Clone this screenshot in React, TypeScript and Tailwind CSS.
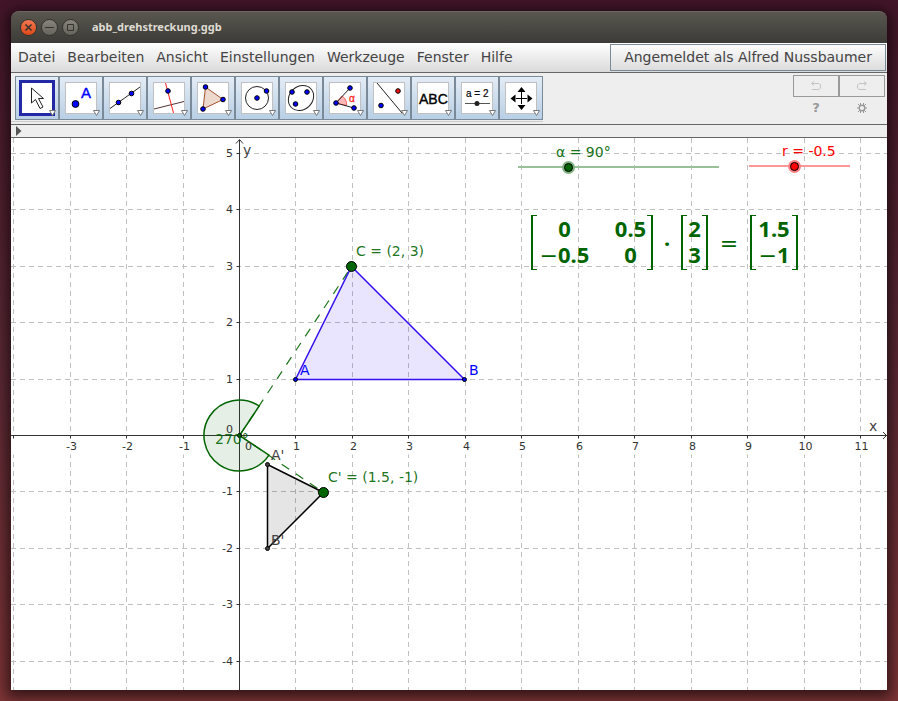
import { useState } from "react";
import type { ReactNode } from "react";

const UNIT = 56.45;
const ORIGIN_X = 228.5;
const ORIGIN_Y = 297.5;

const snap = (n: number) => Math.floor(n) + 0.5;
const px = (x: number) => snap(ORIGIN_X + x * UNIT);
const py = (y: number) => snap(ORIGIN_Y - y * UNIT);

const columns = Array.from({ length: 16 }, (_, i) => i - 4).filter((n) => n !== 0);
const rows = Array.from({ length: 10 }, (_, i) => 5 - i).filter((n) => n !== 0);

const MENU = ["Datei", "Bearbeiten", "Ansicht", "Einstellungen", "Werkzeuge", "Fenster", "Hilfe"];

const Dot = ({ x, y, r = 2.3, fill = "#0000ff" }: { x: number; y: number; r?: number; fill?: string }) => (
  <circle cx={x} cy={y} r={r} fill={fill} stroke="#000" />
);

const TOOLS: { name: string; icon: ReactNode }[] = [
  {
    name: "Bewege",
    icon: <path d="M10.500 8v15l4-3.500 4.500 9 3-1.500-4.500-8.500h5z" fill="#fff" stroke="#222" />,
  },
  {
    name: "Punkt",
    icon: (
      <>
        <Dot x={10.5} y={24} r={3.4} />
        <text x="16" y="18" fontSize="15" fill="#0000ff" stroke="#0000ff" strokeWidth=".4" className="font-['Liberation_Sans',sans-serif]">A</text>
      </>
    ),
  },
  {
    name: "Gerade",
    icon: (
      <>
        <path d="M1 28.500L31 7" stroke="#222" />
        <Dot x={9.5} y={22.5} />
        <Dot x={22.5} y={13.5} />
      </>
    ),
  },
  {
    name: "Senkrechte Gerade",
    icon: (
      <>
        <path d="M1 29L31 21.500" stroke="#533" />
        <path d="M12.500 3L20.500 33" stroke="#ff2020" />
        <Dot x={15} y={11} />
      </>
    ),
  },
  {
    name: "Vieleck",
    icon: (
      <>
        <path d="M8.500 7L26 19.500 6 29z" fill="#ecd8cd" stroke="#a0522d" />
        <Dot x={8.5} y={7} />
        <Dot x={26} y={19.5} />
        <Dot x={6} y={29} />
      </>
    ),
  },
  {
    name: "Kreis",
    icon: (
      <>
        <circle cx="16" cy="18" r="11.500" fill="none" stroke="#222" />
        <Dot x={16} y={18} />
        <Dot x={25.5} y={11} />
      </>
    ),
  },
  {
    name: "Ellipse",
    icon: (
      <>
        <ellipse cx="16" cy="18" rx="13.500" ry="11.500" transform="rotate(-42 16 18)" fill="none" stroke="#222" />
        <Dot x={7} y={12} />
        <Dot x={22} y={12} />
        <Dot x={10.5} y={24} />
      </>
    ),
  },
  {
    name: "Winkel",
    icon: (
      <>
        <path d="M7 23L13 16A10 10 0 0 1 17.500 25.500z" fill="#ffb8b8" stroke="#ff6060" />
        <path d="M21 8L7 23l18 5" fill="none" stroke="#222" />
        <Dot x={7} y={23} />
        <Dot x={21} y={8} />
        <Dot x={25} y={28} />
        <text x="20" y="21.500" fontSize="10" fill="#f22" stroke="#f22" strokeWidth=".3" className="font-['Liberation_Sans',sans-serif]">α</text>
      </>
    ),
  },
  {
    name: "Spiegele an Gerade",
    icon: (
      <>
        <path d="M4 3L29 33" stroke="#222" />
        <Dot x={25} y={11} fill="#f01010" />
        <Dot x={8} y={25.5} />
      </>
    ),
  },
  {
    name: "Text",
    icon: (
      <text x="2" y="23.500" fontSize="14" stroke="#000" strokeWidth=".4" className="font-['Liberation_Sans',sans-serif]">ABC</text>
    ),
  },
  {
    name: "Schieberegler",
    icon: (
      <>
        <text x="5" y="17" fontSize="10" stroke="#111" strokeWidth=".2" className="font-['Liberation_Sans',sans-serif]">a = 2</text>
        <path d="M4 23.500h25" stroke="#555" />
        <circle cx="16" cy="23.500" r="2.500" fill="#222" />
      </>
    ),
  },
  {
    name: "Verschiebe Zeichenblatt",
    icon: (
      <>
        <path d="M16.500 12v12M11 18.500h11" stroke="#000" />
        <path d="M16.500 7l4 5h-8zM16.500 30l4-5h-8zM5.500 18.500l5-4v8zM27.500 18.500l-5-4v8z" />
      </>
    ),
  },
];

function TitleBar() {
  const button = "flex size-[17px] items-center justify-center rounded-full border border-[#33322e]";
  return (
    <header className="flex h-8 items-center gap-1 rounded-t-lg border-t border-[#6b6961] bg-linear-to-b from-[#59574f] to-[#3c3b37] pl-[9px] text-[#34332f]">
      <button aria-label="Schließen" className={`${button} bg-linear-to-b from-[#f5774f] to-[#dd4814]`}>
        <svg width="9" height="9" stroke="currentColor" strokeWidth="1.500"><path d="M1.500 1.500l6 6M7.500 1.500l-6 6" /></svg>
      </button>
      <button aria-label="Minimieren" className={`${button} bg-linear-to-b from-[#87857c] to-[#65635c]`}>
        <svg width="9" height="9" stroke="currentColor"><path d="M0 4.500h9" /></svg>
      </button>
      <button aria-label="Maximieren" className={`${button} bg-linear-to-b from-[#87857c] to-[#65635c]`}>
        <svg width="9" height="9" stroke="currentColor" fill="none"><path d="M1.500 1.500h6v6h-6z" /></svg>
      </button>
      <h1 className="pl-[9px] font-['Noto_Sans',sans-serif] text-[11px] font-bold text-[#dfdbd2]">abb_drehstreckung.ggb</h1>
    </header>
  );
}

function MenuBar() {
  return (
    <nav className="flex h-[30px] justify-between border-b border-[#666] bg-linear-to-b from-white to-[#dadada] text-[14px] text-[#444]">
      <div className="flex items-center gap-3 pl-[7px]">
        {MENU.map((item) => (
          <button key={item}>{item}</button>
        ))}
      </div>
      <button className="my-px mr-px border border-[#7a8a99] px-[13px]">Angemeldet als Alfred Nussbaumer</button>
    </nav>
  );
}

function ToolBar() {
  const [active, setActive] = useState("Bewege");
  return (
    <div className="flex h-[52px] justify-between border-b border-[#666] bg-[#eee]">
      <div className="flex h-[49px] border-b border-[#ccc] pt-[3px] pl-1">
        {TOOLS.map(({ name, icon }) => (
          <button
            key={name}
            aria-label={name}
            aria-pressed={active === name}
            onClick={() => setActive(name)}
            className="flex h-11 w-11 items-center justify-center border border-[#7a8a99] bg-linear-to-b from-[#e3ecf5] to-[#b8cfe5]"
          >
            <svg width="40" height="40" viewBox="-4 -2 40 40" fill="#000">
              {active === name ? (
                <rect x="-.5" y="1.500" width="33" height="33" fill="#fff" stroke="#2329a5" strokeWidth="3" />
              ) : (
                <rect x=".5" y="2.500" width="31" height="31" fill="#fff" stroke="#c0c0c0" />
              )}
              {icon}
              <path d="M28.500 30.500h6l-3 5z" fill="#fff" stroke="#777" />
            </svg>
          </button>
        ))}
      </div>
      <div className="grid grid-cols-2 grid-rows-[22px_22px] pt-[2px] pr-[2px] text-[#999]">
        <button aria-label="Rückgängig" className="flex w-[46px] items-center justify-center border border-[#999] text-[#c4c4c4]">
          <svg width="12" height="10" fill="none" stroke="currentColor"><path d="M4 .5L1.500 2.500 4 4.500M2 2.500h7l1.500 1.500v3L9 8.500H2" /></svg>
        </button>
        <button aria-label="Wiederherstellen" className="flex w-[46px] items-center justify-center border border-[#999] text-[#c4c4c4]">
          <svg width="12" height="10" fill="none" stroke="currentColor"><path d="M8 .5l2.500 2L8 4.500M10 2.500H3L1.500 4v3L3 8.500h7" /></svg>
        </button>
        <button aria-label="Hilfe" className="text-[13px] font-bold">?</button>
        <button aria-label="Einstellungen" className="flex items-center justify-center">
          <svg width="12" height="12" fill="none" stroke="currentColor">
            <circle cx="6" cy="6" r="2.800" strokeWidth="1.400" />
            <path d="M4.500 1v2M7.500 1v2M4.500 9v2M7.500 9v2M1 6h2M9 6h2M2 2l2 2M8 8l2 2M10 2L8 4M4 8l-2 2" />
          </svg>
        </button>
      </div>
    </div>
  );
}

function Plot() {
  return (
    <svg className="absolute inset-0 size-full" fontSize="14">
      {/* grid */}
      <g stroke="#c0c0c0" strokeDasharray="5 4">
        {columns.map((n) => (
          <line key={n} x1={px(n)} x2={px(n)} y1="0" y2="100%" />
        ))}
        {rows.map((n) => (
          <line key={n} x1="0" x2="100%" y1={py(n)} y2={py(n)} />
        ))}
      </g>

      {/* axis labels, each on a blank patch of the grid */}
      <g fontSize="11" fill="#333">
        {columns.map((n) => (
          <g key={n}>
            <rect x={px(n) - 10} y={ORIGIN_Y - 4} width="20" height="23" fill="#fff" />
            <line x1={px(n)} x2={px(n)} y1={ORIGIN_Y} y2={ORIGIN_Y + 3} stroke="#333" />
            {n > -4 && (
              <text x={px(n) + 1} y={ORIGIN_Y + 14.5} textAnchor="middle">{n}</text>
            )}
          </g>
        ))}
        {rows.map((n) => (
          <g key={n}>
            <rect x="206" y={py(n) - 7} width="22" height="14" fill="#fff" />
            <line x1={ORIGIN_X - 3} x2={ORIGIN_X} y1={py(n)} y2={py(n)} stroke="#333" />
            <text x="222" y={py(n) + 3.5} textAnchor="end">{n}</text>
          </g>
        ))}
      </g>

      {/* axes */}
      <g stroke="#333" fill="none">
        <line x1={ORIGIN_X} x2={ORIGIN_X} y1="2" y2="100%" />
        <path d="M225 5.500l3.500-4 3.500 4" />
        <line x1="0" x2="100%" y1={ORIGIN_Y} y2={ORIGIN_Y} />
        <svg x="100%" y={ORIGIN_Y} overflow="visible">
          <path d="M-4 -3.500L-.5 0l-3.500 3.500" />
          <text x="-18" y="-5" fill="#444" stroke="none">x</text>
        </svg>
      </g>
      <text x="232" y="17" fill="#444">y</text>

      {/* rotation angle */}
      <path
        d="M228.500 297.500L258 317.200A35.500 35.500 0 1 1 248.200 268z"
        fill="#006400"
        fillOpacity=".1"
        stroke="#006400"
        strokeWidth="1.500"
      />
      <g stroke="#006400" strokeOpacity=".9" strokeWidth="1.200" strokeDasharray="9 8">
        <line x1="228.500" y1="297.500" x2="340.500" y2="128.500" />
        <line x1="228.500" y1="297.500" x2="312.500" y2="354.500" />
      </g>
      <g fontSize="11" fill="#333">
        <text x="222" y="295" textAnchor="end">0</text>
        <text x="234" y="312">0</text>
      </g>

      {/* triangle and its image */}
      <path d="M284.500 241.500h169L340.500 128.500z" fill="#3300ff" fillOpacity=".1" stroke="#3311ee" strokeWidth="1.500" />
      <path d="M256.500 326.500v84L312.500 354.500z" fill="#000" fillOpacity=".1" stroke="#000" strokeWidth="1.500" />
      <Dot x={284.5} y={241.5} r={2} />
      <Dot x={453.5} y={241.5} r={2} />
      <Dot x={256.5} y={326.5} r={2} fill="#444" />
      <Dot x={256.5} y={410.5} r={2} fill="#444" />
      <Dot x={228.5} y={297.5} r={2} fill="#006400" />
      <Dot x={340.5} y={128.5} r={5} fill="#006400" />
      <Dot x={312.5} y={354.5} r={5} fill="#006400" />
      <g fill="#0000ff">
        <text x="289" y="237">A</text>
        <text x="458" y="237">B</text>
      </g>
      <g fill="#444">
        <text x="260" y="322">A'</text>
        <text x="260" y="407">B'</text>
      </g>
      <g fill="#006400" fillOpacity=".9">
        <text x="204" y="306">270°</text>
        <text x="345" y="118">C = (2, 3)</text>
        <text x="317" y="344">C' = (1.5, -1)</text>
      </g>
    </svg>
  );
}

const MathSign = ({ children }: { children: ReactNode }) => (
  <span className="font-['DejaVu_Sans',sans-serif] font-normal">{children}</span>
);

function Matrix({ children }: { children: ReactNode }) {
  const bracket = "w-[6px] border-y border-[#006400]";
  return (
    <div className="flex h-[55px]">
      <span className={`${bracket} border-l-2`} />
      {children}
      <span className={`${bracket} border-r-2`} />
    </div>
  );
}

function Equation() {
  return (
    <div className="absolute top-[77px] left-[520px] flex items-center font-['Noto_Sans',sans-serif] text-[22px] leading-[26px] font-bold whitespace-nowrap text-[#006400]">
      <Matrix>
        <div className="grid grid-cols-[55px_33px] content-start gap-x-[22px] text-center">
          <span>0</span>
          <span>0.5</span>
          <span><MathSign>−</MathSign>0.5</span>
          <span>0</span>
        </div>
      </Matrix>
      <span className="w-7 text-center">·</span>
      <Matrix>
        <div className="grid w-[15px] content-start text-center">
          <span>2</span>
          <span>3</span>
        </div>
      </Matrix>
      <span className="w-[42px] text-center"><MathSign>=</MathSign></span>
      <Matrix>
        <div className="grid w-[36px] content-start text-center">
          <span>1.5</span>
          <span><MathSign>−</MathSign>1</span>
        </div>
      </Matrix>
    </div>
  );
}

function Sliders() {
  // the input is 4px wider than its track on either side, so the thumb's centre can reach the ends
  const base =
    "-mx-1 block h-3 w-[calc(100%+8px)] appearance-none bg-[length:calc(100%-8px)_2px] bg-center bg-no-repeat [&::-webkit-slider-thumb]:size-[9px] [&::-webkit-slider-thumb]:appearance-none [&::-webkit-slider-thumb]:rounded-full [&::-webkit-slider-thumb]:border [&::-webkit-slider-thumb]:border-black";
  return (
    <>
      <div className="absolute top-[5px] left-[507px] w-[201px] text-[14px] leading-[18px] text-[#006400]">
        <label htmlFor="alpha" className="block pl-[38px] opacity-90">α = 90°</label>
        <input
          id="alpha"
          type="range"
          min="0"
          max="360"
          defaultValue="90"
          className={`${base} bg-[linear-gradient(#99c199,#99c199)] [&::-webkit-slider-thumb]:bg-[#006400] [&::-webkit-slider-thumb]:shadow-[0_0_0_2px_#80b180]`}
        />
      </div>
      <div className="absolute top-1 left-[738px] w-[101px] text-[14px] leading-[18px] text-[#ff0000]">
        <label htmlFor="ratio" className="block pl-[33px]">r = -0.5</label>
        <input
          id="ratio"
          type="range"
          min="-5"
          max="5"
          step="0.1"
          defaultValue="-0.5"
          className={`${base} bg-[linear-gradient(#ff9999,#ff9999)] [&::-webkit-slider-thumb]:bg-[#ff0000] [&::-webkit-slider-thumb]:shadow-[0_0_0_2px_#ff8080]`}
        />
      </div>
    </>
  );
}

export default function App() {
  return (
    <div className="flex min-h-screen flex-col bg-linear-to-b from-[#421528] via-[#5a2834] to-[#7e3436] p-[11px] font-['DejaVu_Sans',sans-serif]">
      <div className="flex flex-1 flex-col rounded-t-lg shadow-[0_3px_14px_4px_rgba(0,0,0,0.6)]">
        <TitleBar />
        <MenuBar />
        <ToolBar />
        <div className="flex h-[13px] items-center border-b border-[#666] bg-[#eee] pl-[5px]">
          <button aria-label="Eingabe einblenden">
            <svg width="6" height="10" fill="#555"><path d="M0 0l5.500 5L0 10z" /></svg>
          </button>
        </div>
        <main className="relative min-h-[300px] flex-1 overflow-hidden bg-white">
          <Plot />
          <Sliders />
          <Equation />
        </main>
      </div>
    </div>
  );
}
